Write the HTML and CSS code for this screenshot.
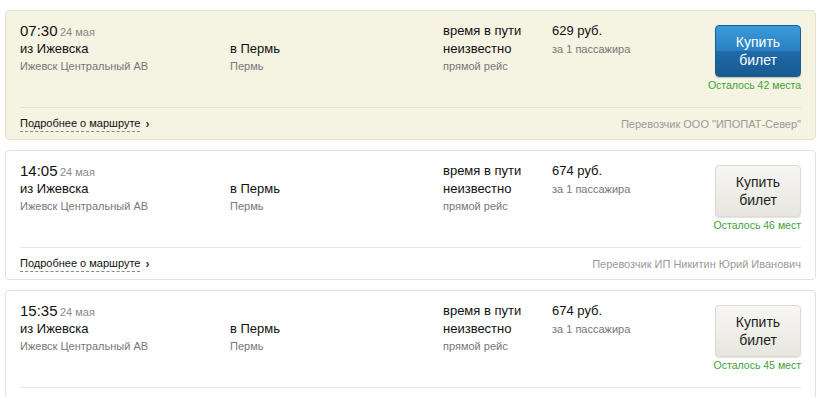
FILE: index.html
```html
<!DOCTYPE html>
<html lang="ru">
<head>
<meta charset="utf-8">
<link rel="stylesheet" href="styles.css">
</head>
<body>
<div class="list">
  <div class="trip trip--active">
    <div class="trip-main">
      <div class="col col-from">
        <div class="time-row"><span class="time">07:30</span> <span class="date">24 мая</span></div>
        <div class="city">из Ижевска</div>
        <div class="station">Ижевск Центральный АВ</div>
      </div>
      <div class="col col-to">
        <div class="time-row"></div>
        <div class="city">в Пермь</div>
        <div class="station">Пермь</div>
      </div>
      <div class="col col-dur">
        <div class="line">время в пути</div>
        <div class="line">неизвестно</div>
        <div class="station">прямой рейс</div>
      </div>
      <div class="col col-price">
        <div class="price">629 руб.</div>
        <div class="station">за 1 пассажира</div>
      </div>
      <div class="col col-buy">
        <button class="buy buy--blue">Купить<br>билет</button>
        <div class="seats">Осталось 42 места</div>
      </div>
    </div>
    <div class="trip-foot">
      <a class="more">Подробнее о маршруте</a><span class="chev">›</span>
      <span class="carrier">Перевозчик ООО "ИПОПАТ-Север"</span>
    </div>
  </div>

  <div class="trip">
    <div class="trip-main">
      <div class="col col-from">
        <div class="time-row"><span class="time">14:05</span> <span class="date">24 мая</span></div>
        <div class="city">из Ижевска</div>
        <div class="station">Ижевск Центральный АВ</div>
      </div>
      <div class="col col-to">
        <div class="time-row"></div>
        <div class="city">в Пермь</div>
        <div class="station">Пермь</div>
      </div>
      <div class="col col-dur">
        <div class="line">время в пути</div>
        <div class="line">неизвестно</div>
        <div class="station">прямой рейс</div>
      </div>
      <div class="col col-price">
        <div class="price">674 руб.</div>
        <div class="station">за 1 пассажира</div>
      </div>
      <div class="col col-buy">
        <button class="buy">Купить<br>билет</button>
        <div class="seats">Осталось 46 мест</div>
      </div>
    </div>
    <div class="trip-foot">
      <a class="more">Подробнее о маршруте</a><span class="chev">›</span>
      <span class="carrier">Перевозчик ИП Никитин Юрий Иванович</span>
    </div>
  </div>

  <div class="trip">
    <div class="trip-main">
      <div class="col col-from">
        <div class="time-row"><span class="time">15:35</span> <span class="date">24 мая</span></div>
        <div class="city">из Ижевска</div>
        <div class="station">Ижевск Центральный АВ</div>
      </div>
      <div class="col col-to">
        <div class="time-row"></div>
        <div class="city">в Пермь</div>
        <div class="station">Пермь</div>
      </div>
      <div class="col col-dur">
        <div class="line">время в пути</div>
        <div class="line">неизвестно</div>
        <div class="station">прямой рейс</div>
      </div>
      <div class="col col-price">
        <div class="price">674 руб.</div>
        <div class="station">за 1 пассажира</div>
      </div>
      <div class="col col-buy">
        <button class="buy">Купить<br>билет</button>
        <div class="seats">Осталось 45 мест</div>
      </div>
    </div>
    <div class="trip-foot">
      <a class="more">Подробнее о маршруте</a><span class="chev">›</span>
      <span class="carrier">Перевозчик ИП Никитин Юрий Иванович</span>
    </div>
  </div>
</div>
</body>
</html>
```
FILE: styles.css
```css
* { box-sizing: border-box; }
html, body { margin: 0; padding: 0; background: #fff; }
body {
  font-family: "Liberation Sans", Arial, sans-serif;
  color: #1e1e1e;
  overflow: hidden;
}
.list {
  padding: 10px 4px 0 5px;
  display: flex;
  flex-direction: column;
  gap: 10px;
}
.trip {
  background: #fff;
  border: 1px solid #e2e2e2;
  border-radius: 4px;
  padding: 11px 14px 0 14px;
}
.trip--active {
  background: #f5f3e2;
  border-color: #e6e3cc;
}
.trip-main {
  display: grid;
  grid-template-columns: 210px 213px 109px 1fr auto;
  padding-bottom: 14px;
  border-bottom: 1px solid #e6e6e6;
}
.trip--active .trip-main { border-bottom-color: #e4e1cd; }
.time-row { height: 18px; line-height: 18px; }
.time { font-size: 15px; color: #111; }
.date { font-size: 11px; color: #888; margin-left: -2px; }
.city, .line { font-size: 13px; line-height: 17px; height: 17px; color: #111; }
.line:first-child { line-height: 18px; height: 18px; }
.station { font-size: 11px; line-height: 19px; color: #777; }
.price { font-size: 13px; line-height: 18px; color: #111; height: 18px; }
.col-price .station { line-height: 16px; padding-top: 1px; }
.col-buy {
  display: flex;
  flex-direction: column;
  align-items: flex-end;
  padding-top: 3px;
}
.buy {
  width: 86px;
  height: 52px;
  border-radius: 4px;
  font-family: inherit;
  font-size: 14px;
  line-height: 18px;
  padding: 0;
  cursor: pointer;
  color: #1e1e1e;
  border: 1px solid #dcdbd4;
  background: linear-gradient(#f7f6f3 0%, #efeee9 50%, #e6e5df 100%);
  box-shadow: 0 1px 1px rgba(0,0,0,0.12);
}
.buy--blue {
  color: #fff;
  border: 1px solid #1b5f95;
  background: linear-gradient(#3b9bdc 0%, #2a7fc2 50%, #1f6aa8 51%, #175a91 100%);
  box-shadow: 0 1px 1px rgba(0,0,0,0.2);
}
.seats {
  font-size: 10.5px;
  line-height: 16px;
  color: #3ea23a;
  white-space: nowrap;
}
.trip-foot {
  display: flex;
  align-items: center;
  font-size: 11px;
  line-height: 16px;
  padding: 8px 0 7px;
}
.more {
  color: #111;
  border-bottom: 1px dashed #888;
  line-height: 15px;
  text-decoration: none;
}
.chev {
  margin-left: 5px;
  font-size: 12px;
  font-weight: bold;
  color: #333;
}
.carrier {
  margin-left: auto;
  color: #9a9a9a;
}
```
